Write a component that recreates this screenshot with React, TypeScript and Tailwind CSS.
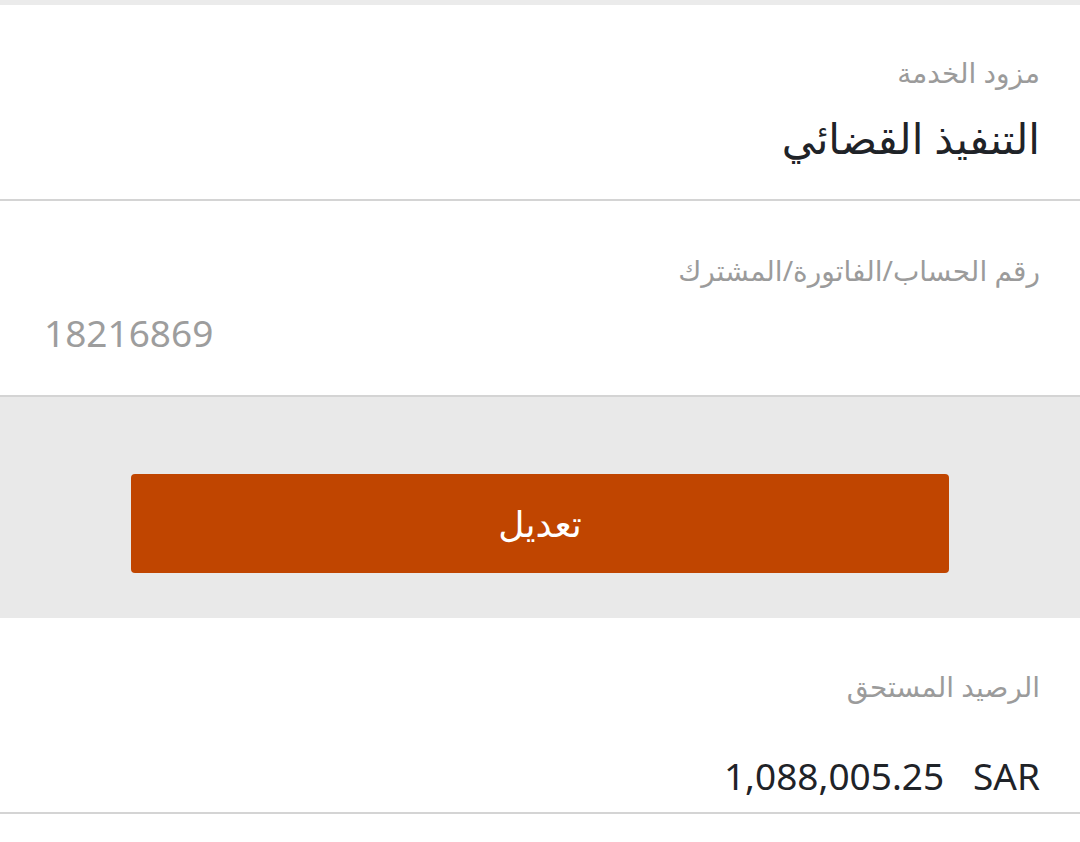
import React from "react";

const Field = ({ label, top, children }: { label: string; top: string; children: React.ReactNode }) => {
    return (
        <div className={`bg-white border-b-2 border-[#d4d4d4] px-10 h-[196px] ${top}`}>
            <div className="text-[28px] leading-[40px] text-[#9b9b9b] text-right">{label}</div>
            {children}
        </div>
    );
};

const App = () => {
    return (
        <div dir="rtl" className="w-[1080px] min-h-[842px] bg-white" style={{ fontFamily: '"Noto Sans", "DejaVu Sans", sans-serif' }}>
            <div className="h-[5px] bg-[#ebebeb]" />
            <Field label="مزود الخدمة" top="pt-[47px]">
                <div className="mt-[21px] text-[42px] leading-[50px] text-[#1f2328]">التنفيذ القضائي</div>
            </Field>
            <Field label="رقم الحساب/الفاتورة/المشترك" top="pt-[49px]">
                <div dir="ltr" className="mt-[21px] pl-[4px] text-[37px] leading-[44px] text-[#9d9d9d] text-left">18216869</div>
            </Field>
            <div className="bg-[#e9e9e9] h-[221px] pt-[77px] flex justify-center">
                <button className="w-[818px] h-[99px] rounded-[4px] bg-[#c04500] text-white text-[36px]">
                    تعديل
                </button>
            </div>
            <Field label="الرصيد المستحق" top="pt-[48px]">
                <div dir="ltr" className="mt-[45px] text-[37px] leading-[50px] text-[#1f2328] text-right">
                    1,088,005.25&nbsp;&nbsp;&nbsp;SAR
                </div>
            </Field>
        </div>
    );
};

export default App;
